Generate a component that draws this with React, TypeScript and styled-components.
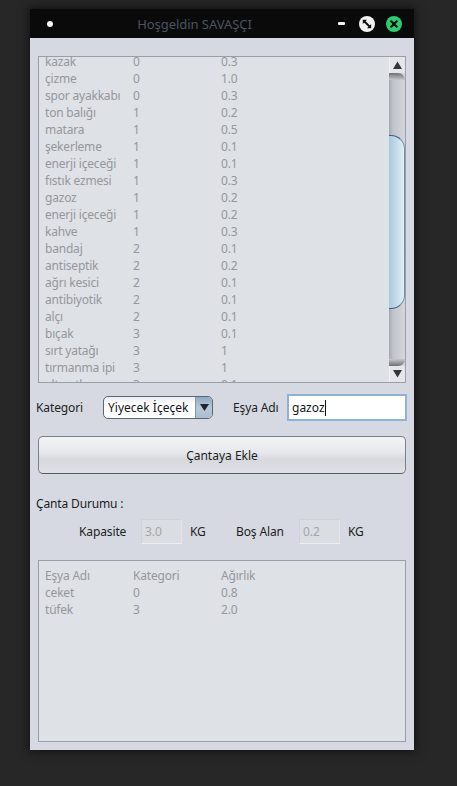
import React from "react";
import styled, { createGlobalStyle } from "styled-components";

const Global = createGlobalStyle`
  html, body { margin: 0; padding: 0; background: #272727; height: 100%; }
  body { font-family: "Noto Sans", "Open Sans", sans-serif; font-size: 12px; color: #1c1e22; }
  #root { width: 457px; height: 786px; overflow: hidden; }
`;
const Page = styled.div`
  width: 457px; height: 786px; padding: 9px 0 0 30px; box-sizing: border-box; background: #272727;
`;
const Window = styled.div`
  width: 384px; height: 741px; background: #d6d9e1; display: flex; flex-direction: column;
  box-shadow: 0 0 9px 2px rgba(0,0,0,.5);
`;
const TitleBar = styled.div`
  height: 29px; flex: none; background: #0a0a0a; display: flex; align-items: center; padding: 0 12px 0 17px;
`;
const MenuDot = styled.span`
  width: 6px; height: 6px; border-radius: 50%; background: #f2f2f2; flex: none;
`;
const Title = styled.div`
  flex: 1; text-align: center; color: #4c5361; font-size: 13px; padding-right: 2px; white-space: nowrap; letter-spacing: -0.05px;
`;
const Controls = styled.div`
  display: flex; align-items: center; gap: 11px; flex: none;
`;
const Minimize = styled.span`
  width: 7px; height: 3px; background: #f2f2f2; border-radius: 1px; margin-right: 3px;
`;
const RoundIcon = styled.svg`
  width: 16px; height: 16px; display: block;
`;
const Body = styled.div`
  flex: 1; display: flex; flex-direction: column; padding: 18px 8px 8px 8px; min-height: 0;
`;
const ListBox = styled.div`
  height: 327px; flex: none; box-sizing: border-box; border: 1px solid #9a9ea6; background: #dee1e6;
  display: flex; overflow: hidden;
`;
const ListInner = styled.div`
  flex: 1; overflow: hidden; padding-left: 6px;
`;
const ScrollContent = styled.div`
  margin-top: -4px;
`;
const Row = styled.div`
  display: grid; grid-template-columns: 88px 88px 1fr; height: 17px; line-height: 17px; color: #96979b; font-size: 12px; white-space: nowrap; letter-spacing: -0.2px;
`;
const Scrollbar = styled.div`
  width: 16px; flex: none; display: flex; flex-direction: column;
  background: linear-gradient(90deg, #a4a7ae 0, #c2c4cb 4px, #d4d6dc 100%);
`;
const ArrowButton = styled.div`
  height: 16px; flex: none; background: #e4e6ea; display: flex; align-items: center; justify-content: center;
  border-left: 1px solid #eef0f2; box-sizing: border-box;
`;
const ArrowCap = styled.div<{ $bottom?: boolean }>`
  height: 7px; flex: none;
  background: ${p => p.$bottom
    ? "linear-gradient(0deg, #6e7075 0, #c6c8cf 100%)"
    : "linear-gradient(180deg, #6e7075 0, #c6c8cf 100%)"};
  border-radius: ${p => p.$bottom ? "0 0 10px 0" : "0 10px 0 0"};
`;
const Track = styled.div`
  flex: 1; padding-top: 55px;
`;
const Thumb = styled.div`
  height: 174px; box-sizing: border-box; border: 1px solid #3f5f7f; border-left: none;
  border-right-color: #6f90ad; border-radius: 0 14px 14px 0;
  background: linear-gradient(90deg, #a9c8df 0, #c4dbeb 50%, #e4eef5 100%);
`;
const FormRow = styled.div`
  height: 27px; margin-top: 11px; display: flex; align-items: center; margin-left: -2px; margin-right: -1px;
`;
const Label = styled.span<{ $w?: number; $ml?: number }>`
  font-size: 12px; color: #1c1e22; white-space: nowrap; flex: none; letter-spacing: -0.12px;
  width: ${p => p.$w ? `${p.$w}px` : "auto"}; margin-left: ${p => p.$ml ?? 0}px;
`;
const Combo = styled.div`
  width: 110px; height: 23px; box-sizing: border-box; border: 1px solid #5d6673; border-radius: 5px;
  background: linear-gradient(180deg, #e9ecf1 0, #fff 35%, #fff 100%); display: flex; align-items: center; overflow: hidden; flex: none;
`;
const ComboText = styled.span`
  flex: 1; padding-left: 4px; font-size: 12px; color: #14161a; white-space: nowrap;
`;
const ComboArrow = styled.div`
  width: 16px; height: 100%; flex: none; display: flex; align-items: center; justify-content: center;
  border-left: 1px solid #8496a8; background: linear-gradient(180deg, #8ea9c2 0, #b5c9da 50%, #a9bed1 100%);
`;
const TextField = styled.div`
  width: 120px; height: 27px; box-sizing: border-box; border: 2px solid #8db3d8; background: #fff; flex: none;
  display: flex; align-items: center; padding-left: 3px; font-size: 12px; color: #14161a; margin-left: 7px;
`;
const Caret = styled.span`
  width: 1px; height: 16px; background: #111;
`;
const AddButton = styled.button`
  width: 368px; height: 38px; margin-top: 15px; flex: none; padding: 0; border: 1px solid #7c8087; border-bottom-color: #55585e; border-radius: 5px;
  font: 12px "Noto Sans", sans-serif; color: #1c1e22;
  background: linear-gradient(180deg, #f3f4f6 0, #e5e7ea 45%, #d6d8dd 62%, #dfe1e5 100%);
`;
const Heading = styled.div`
  margin-top: 21px; margin-left: -2px; height: 17px; line-height: 17px; font-size: 12px; color: #1c1e22; letter-spacing: -0.15px;
`;
const CapRow = styled.div`
  display: flex; align-items: center; height: 25px; margin-top: 7px; padding-left: 41px;
`;
const ReadOnly = styled.div`
  width: 41px; height: 25px; box-sizing: border-box; flex: none;
  background: #dadde2; border: 1px solid #cfd2d8; border-bottom-color: #eceef0; border-right-color: #e2e4e8;
  color: #a3a5a9; font-size: 12px; line-height: 23px; padding-left: 3px;
`;
const BagBox = styled.div`
  height: 182px; flex: none; margin-top: 16px; box-sizing: border-box; border: 1px solid #9a9ea6; background: #dee1e6; padding: 6px 0 0 6px;
`;

const items: [string, string, string][] = [
  ["kazak","0","0.3"],["çizme","0","1.0"],["spor ayakkabı","0","0.3"],["ton balığı","1","0.2"],["matara","1","0.5"],
  ["şekerleme","1","0.1"],["enerji içeceği","1","0.1"],["fıstık ezmesi","1","0.3"],["gazoz","1","0.2"],["enerji içeceği","1","0.2"],
  ["kahve","1","0.3"],["bandaj","2","0.1"],["antiseptik","2","0.2"],["ağrı kesici","2","0.1"],["antibiyotik","2","0.1"],
  ["alçı","2","0.1"],["bıçak","3","0.1"],["sırt yatağı","3","1"],["tırmanma ipi","3","1"],["altıpatlar","3","0.1"],
];
const bag: [string, string, string][] = [["Eşya Adı","Kategori","Ağırlık"],["ceket","0","0.8"],["tüfek","3","2.0"]];

const Rows = ({ data }: { data: [string, string, string][] }) => (
  <>
    {data.map((r, i) => (
      <Row key={i}><span>{r[0]}</span><span>{r[1]}</span><span>{r[2]}</span></Row>
    ))}
  </>
);

export default function App() {
  return (
    <Page>
      <Global />
      <Window>
        <TitleBar>
          <MenuDot />
          <Title>Hoşgeldin SAVAŞÇI</Title>
          <Controls>
            <Minimize />
            <RoundIcon viewBox="0 0 16 16">
              <circle cx="8" cy="8" r="8" fill="#f4f4f4" />
              <path d="M5.5 5.5 10.5 10.5" stroke="#111" strokeWidth="2" />
              <path d="M3.8 3.8H8L3.8 8zM12.2 12.2H8L12.2 8z" fill="#111" />
            </RoundIcon>
            <RoundIcon viewBox="0 0 16 16">
              <circle cx="8" cy="8" r="8" fill="#2ecc71" />
              <path d="M5.2 5.2 10.8 10.8M10.8 5.2 5.2 10.8" stroke="#0a0a0a" strokeWidth="2" strokeLinecap="round" />
            </RoundIcon>
          </Controls>
        </TitleBar>
        <Body>
          <ListBox>
            <ListInner>
              <ScrollContent><Rows data={items} /></ScrollContent>
            </ListInner>
            <Scrollbar>
              <ArrowButton>
                <svg width="9" height="8" viewBox="0 0 9 8"><path d="M4.5 0.5 9 8H0z" fill="#33363b" /></svg>
              </ArrowButton>
              <ArrowCap />
              <Track><Thumb /></Track>
              <ArrowCap $bottom />
              <ArrowButton>
                <svg width="9" height="8" viewBox="0 0 9 8"><path d="M0 0h9L4.5 7.5z" fill="#33363b" /></svg>
              </ArrowButton>
            </Scrollbar>
          </ListBox>
          <FormRow>
            <Label $w={67}>Kategori</Label>
            <Combo>
              <ComboText>Yiyecek İçeçek</ComboText>
              <ComboArrow>
                <svg width="9" height="7" viewBox="0 0 9 7"><path d="M0 0h9L4.5 7z" fill="#23262b" /></svg>
              </ComboArrow>
            </Combo>
            <Label $ml={20} $w={47}>Eşya Adı</Label>
            <TextField>gazoz<Caret /></TextField>
          </FormRow>
          <AddButton type="button">Çantaya Ekle</AddButton>
          <Heading>Çanta Durumu :</Heading>
          <CapRow>
            <Label $w={62}>Kapasite</Label>
            <ReadOnly>3.0</ReadOnly>
            <Label $ml={8} $w={46}>KG</Label>
            <Label $w={63}>Boş Alan</Label>
            <ReadOnly>0.2</ReadOnly>
            <Label $ml={8}>KG</Label>
          </CapRow>
          <BagBox><Rows data={bag} /></BagBox>
        </Body>
      </Window>
    </Page>
  );
}
